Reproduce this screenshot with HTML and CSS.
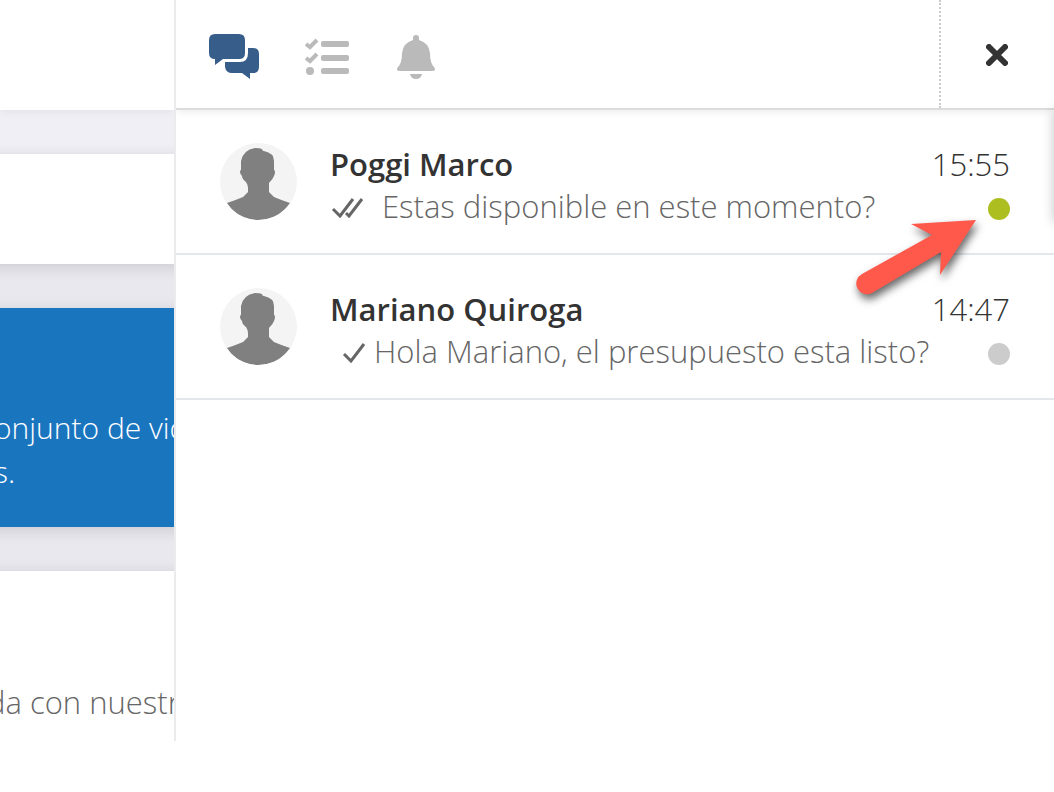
FILE: index.html
```html
<!DOCTYPE html>
<html lang="es">
<head>
  <meta charset="UTF-8">
  <meta name="viewport" content="width=device-width, initial-scale=1.0">
  <title>Mensajes</title>
  <link rel="stylesheet" href="styles.css">
</head>
<body>

  <svg class="symbols" aria-hidden="true">
    <symbol id="person" viewBox="0 0 77 77">
      <path fill="#808080" d="M7 60 Q16 57 23 54 L28 49 V45 Q28 42 26 39 Q22 36 22 33 Q20 31 20 29 Q20 27 21 27 V18 Q23 7 35 5 Q40 5 42 6 Q42 8 44 8 Q54 10 54 18 V27 Q55 27 55 29 Q55 31 54 33 Q53 36 49 40 V49 L54 54 Q61 57 70 60 Q58 77 38 77 Q18 77 7 60 Z"/>
    </symbol>
  </svg>

  <div class="app">
    <main class="page">
      <div class="topbar"></div>
      <section class="card card-empty"></section>
      <section class="card card-blue">
        <p>onjunto de vid</p>
        <p>s.</p>
      </section>
      <section class="card card-text">
        <p>da con nuestr</p>
      </section>
    </main>

    <aside class="drawer">
      <header class="drawer-header">
        <nav class="tabs">
          <button type="button" class="tab active" aria-label="Mensajes">
            <svg width="50" height="45" viewBox="0 0 50 45">
              <path d="M6 0 H30 Q36 0 36 6 V19 Q36 25 30 25 H14 L6 31 V25 Q0 25 0 19 V6 Q0 0 6 0 Z"/>
              <path d="M39 14 H44 Q50 14 50 20 V33 Q50 39 44 39 H41 V45 L33 39 H23 Q17 39 16 33 V28 H31 Q39 28 39 19 Z"/>
            </svg>
          </button>
          <button type="button" class="tab" aria-label="Tareas">
            <svg width="48" height="38" viewBox="0 0 48 38">
              <rect x="17" y="3" width="28" height="6" rx="2"/>
              <rect x="17" y="17" width="28" height="6" rx="2"/>
              <rect x="17" y="30" width="28" height="6" rx="2"/>
              <circle cx="6" cy="33" r="4"/>
              <path class="tick" d="M2 6 L6 9 L13 2 M2 20 L6 23 L13 16"/>
            </svg>
          </button>
          <button type="button" class="tab" aria-label="Avisos">
            <svg width="38" height="45" viewBox="0 -1 38 45">
              <path d="M16 5 V3 Q16 0 19 0 Q22 0 22 3 V5 Q32 8 33 18 Q33 28 37 32 Q40 36 35 36 H3 Q-2 36 1 32 Q5 28 5 18 Q6 8 16 5 Z"/>
              <path d="M13 39 H25 Q24 44 19 44 Q14 44 13 39 Z"/>
            </svg>
          </button>
        </nav>
        <button type="button" class="close" aria-label="Cerrar">
          <svg width="22" height="22" viewBox="0 0 22 22"><path d="M3 3 L19 19 M19 3 L3 19"/></svg>
        </button>
      </header>

      <ul class="chats">
        <li class="chat">
          <svg class="avatar" role="img" aria-label="Poggi Marco"><use href="#person"/></svg>
          <div class="chat-body">
            <div class="chat-row">
              <h2>Poggi Marco</h2>
              <time>15:55</time>
            </div>
            <div class="chat-row">
              <p class="message">
                <svg class="check read" width="34" height="24" viewBox="0 0 34 24"><path d="M3 15 L10 22 L23 5 M16 19 L19 22 L32 5"/></svg>
                Estas disponible en este momento?
              </p>
              <span class="status online"></span>
            </div>
          </div>
          <svg class="arrow" width="140" height="100" viewBox="0 0 140 100">
            <path d="M126 10 L61 14 L82 25 L12 64 A10 10 0 0 0 22 83 L91 42 L90 65 Z"/>
          </svg>
        </li>
        <li class="chat">
          <svg class="avatar" role="img" aria-label="Mariano Quiroga"><use href="#person"/></svg>
          <div class="chat-body">
            <div class="chat-row">
              <h2>Mariano Quiroga</h2>
              <time>14:47</time>
            </div>
            <div class="chat-row">
              <p class="message">
                <svg class="check sent" width="24" height="24" viewBox="0 0 24 24"><path d="M2 15 L9 22 L22 5"/></svg>
                Hola Mariano, el presupuesto esta listo?
              </p>
              <span class="status"></span>
            </div>
          </div>
        </li>
      </ul>
    </aside>
  </div>

</body>
</html>
```

FILE: styles.css
```css
* {
  box-sizing: border-box;
}

body {
  margin: 0;
  background: #fff;
  font-family: "Open Sans", sans-serif;
  font-size: 31px;
  font-weight: 300;
  line-height: 44px;
  color: #666;
}

h2, p, ul {
  margin: 0;
  padding: 0;
}

button {
  padding: 0;
  border: none;
  background: none;
  cursor: pointer;
}

svg {
  display: block;
}

.symbols {
  width: 0;
  height: 0;
  position: absolute;
}

.app {
  display: grid;
  grid-template-columns: 174px 1fr;
}

/* Page behind the drawer */
.page {
  display: flex;
  flex-direction: column;
  gap: 44px;
  overflow: hidden;
  background: linear-gradient(#f0eff5 154px, #e9e8ee 264px);
  white-space: nowrap;
}

.topbar {
  height: 110px;
  background: #fff;
  box-shadow: 0 0 10px rgba(0, 0, 0, 0.08);
}

/* wider than the column, so the shadow stays even at the sides */
.card {
  margin: 0 -20px;
  padding: 0 20px;
  background: #fff;
  box-shadow: 0 3px 14px rgba(0, 0, 0, 0.13);
}

.card-empty {
  height: 110px;
}

.card-blue {
  padding-top: 98px;
  padding-bottom: 33px;
  background: #1a75bf;
  font-size: 30px;
  color: #fff;
}

.card-blue p {
  margin-left: -6px;
}

.card-text {
  padding-top: 109px;
  padding-bottom: 17px;
}

.card-text p {
  margin-left: -13px;
}

/* Drawer */
.drawer {
  border-left: 2px solid #ebebed;
  background: #fff;
  overflow: hidden;
}

.drawer-header {
  position: relative;
  display: flex;
  justify-content: space-between;
  height: 110px;
  border-bottom: 2px solid #dcdcdc;
  box-shadow: 0 2px 8px rgba(0, 0, 0, 0.08);
}

.tabs {
  display: flex;
  align-items: center;
  gap: 45px;
  padding: 5px 0 0 33px;
}

.tab {
  fill: #bababa;
}

.tab.active {
  fill: #375e8b;
}

.tick {
  fill: none;
  stroke: #bababa;
  stroke-width: 4;
}

.close {
  display: flex;
  align-items: center;
  justify-content: center;
  width: 115px;
  padding: 2px 1px 0 0;
  border-left: 2px dotted #ccc;
}

.close path {
  stroke: #333;
  stroke-width: 6;
  stroke-linecap: round;
}

.chats {
  position: relative;
  list-style: none;
}

/* shadow of the panel hidden past the right edge */
.chats::after {
  content: "";
  position: absolute;
  top: 0;
  right: -10px;
  width: 10px;
  height: 112px;
  box-shadow: 0 0 12px rgba(0, 0, 40, 0.25);
}

.chat {
  position: relative;
  display: flex;
  gap: 33px;
  padding: 33px 44px 22px;
  border-bottom: 2px solid #e3e7ec;
}

.avatar {
  flex: none;
  width: 77px;
  height: 77px;
  border-radius: 50%;
  background: #f4f4f4;
}

.chat-body {
  flex: 1;
  min-width: 0;
}

.chat-row {
  display: flex;
  justify-content: space-between;
  height: 44px;
  line-height: 42px;
}

.chat h2 {
  font-size: 31px;
  font-weight: 600;
  color: #333;
}

.chat time {
  color: #333;
}

.message {
  display: flex;
  align-items: center;
  align-self: flex-start;
  line-height: 38px;
  white-space: nowrap;
}

.check {
  fill: none;
  stroke: #666;
  stroke-width: 3;
}

.check.read {
  margin-right: 18px;
}

.check.sent {
  margin: 0 8px 0 12px;
}

.status {
  flex: none;
  align-self: center;
  width: 22px;
  height: 22px;
  border-radius: 50%;
  background: #ccc;
}

.status.online {
  background: #adbe21;
}

/* Pointer to the online status */
.arrow {
  position: absolute;
  right: 64px;
  top: 100px;
  z-index: 1;
  fill: #ff594b;
  filter: drop-shadow(2px 5px 4px rgba(0, 0, 0, 0.6));
}
```
